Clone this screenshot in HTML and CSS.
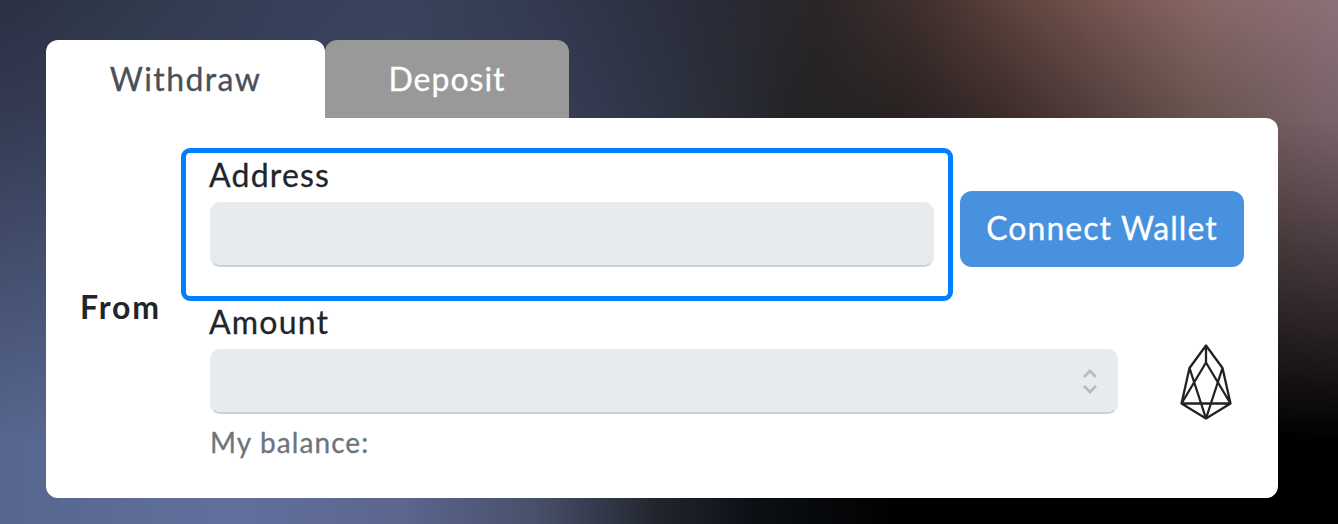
FILE: index.html
```html
<!DOCTYPE html>
<html lang="en">
<head>
<meta charset="utf-8">
<title>Withdraw</title>
<link rel="stylesheet" href="styles.css">
</head>
<body>
<main class="page">
  <nav class="tabs">
    <a class="tab tab-active"><span class="tab-text-active">Withdraw</span></a>
    <a class="tab tab-idle"><span class="tab-text-idle">Deposit</span></a>
  </nav>
  <section class="card">
    <div class="side"><span class="from">From</span></div>
    <div class="form">
      <div class="row row-address">
        <div class="group group-focus">
          <label class="label" for="address"><span class="address-text">Address</span></label>
          <input class="input" id="address" type="text">
        </div>
        <button class="connect"><span class="connect-text">Connect Wallet</span></button>
      </div>
      <div class="row">
        <div class="group group-amount">
          <label class="label" for="amount"><span class="amount-text">Amount</span></label>
          <div class="input stepper">
            <input class="bare" id="amount" type="text">
            <svg class="arrows" width="16" height="26" viewBox="0 0 16 26"><path d="M2 8L8 2L14 8M2 17L8 23L14 17"/></svg>
          </div>
          <div class="balance"><span class="balance-text">My balance:</span></div>
        </div>
        <svg class="eos" width="54" height="78" viewBox="0 0 54 78"><path d="M27 2.5L43.5 25L51.5 60.5L27 75.5L2.5 60.5L10.5 25ZM27 2.5V19.5M27 19.5L2.5 60.5H51.5ZM10.5 25L27 75.5L43.5 25"/></svg>
      </div>
    </div>
  </section>
</main>
</body>
</html>
```
FILE: styles.css
```css
* { box-sizing: border-box; }
body {
  margin: 0;
  font-family: Lato, "Open Sans", sans-serif;
  color: #212529;
}
.page {
  position: relative;
  isolation: isolate;
  width: 1338px;
  height: 524px;
  padding: 40px 60px 26px 46px;
  overflow: hidden;
  background: linear-gradient(90deg, #56668e 0, #626f9d 230px, #5c668f 400px, #474f68 540px, #20242d 660px, #0b0f14 760px, #000 900px);
}
.page::before, .page::after {
  content: "";
  position: absolute;
  inset: 0;
  z-index: -1;
}
.page::before {
  background: linear-gradient(90deg, #343b53 0, #3b4561 400px, #343b52 590px, #2c303c 700px, #232325 800px, #292222 900px, #3b2b2a 1000px, #523f3d 1100px, #69544f 1200px, #7a636c 1338px);
  mask-image: linear-gradient(#000 118px, transparent 440px);
}
.page::after {
  background: linear-gradient(90deg, #2b3044 0, #303a4c 130px, #37405a 300px, #39435b 400px, #333a50 540px, #292c39 700px, #2a2527 820px, #43322f 930px, #5e433d 1010px, #75544f 1100px, #866665 1200px, #8b7078 1338px);
  mask-image: linear-gradient(#000 0, transparent 118px);
}
.tabs { display: flex; height: 78px; }
.tab {
  display: flex;
  justify-content: center;
  border-radius: 12px 12px 0 0;
  font-size: 32px;
  line-height: 78px;
}
.tab-active { width: 279px; background: #fff; color: #495057; }
.tab-idle { width: 244px; background: #999; color: #fff; }
.tab-text-active { letter-spacing: 1.4px; -webkit-text-stroke: .3px; }
.tab-text-idle { letter-spacing: 1px; -webkit-text-stroke: .3px; }
.card {
  display: flex;
  height: 380px;
  padding-top: 30px;
  border-radius: 0 12px 12px 12px;
  background: #fff;
}
.side {
  width: 135px;
  padding: 138px 0 0 34px;
  font-size: 32px;
  line-height: 42px;
  font-weight: 700;
}
.from { letter-spacing: 1.9px; }
.form { flex: 1; }
.row { display: flex; }
.row-address { height: 152px; }
.group { display: flex; flex-direction: column; }
.group-focus {
  width: 772px;
  height: 153px;
  padding: 1px 14px 0 24px;
  border: 5px solid #0080ff;
  border-radius: 9px;
}
.group-amount { width: 937px; padding: 1px 0 0 29px; }
.label {
  height: 48px;
  margin-left: -1px;
  font-size: 32px;
  line-height: 41px;
  -webkit-text-stroke: .3px;
}
.address-text { letter-spacing: 1.2px; }
.amount-text { letter-spacing: 1.2px; }
.input {
  width: 100%;
  height: 65px;
  border: 2px solid transparent;
  border-bottom-color: #cbd0d7;
  border-radius: 10px;
  outline: none;
  background: #e8ebee;
}
.connect {
  width: 284px;
  height: 76px;
  margin: 43px 0 0 7px;
  padding: 0 0 4px;
  border: 0;
  border-radius: 12px;
  background: #4791df;
  color: #fff;
  font: 32px Lato, "Open Sans", sans-serif;
}
.connect-text { letter-spacing: 1.05px; -webkit-text-stroke: .3px; }
.stepper { display: flex; align-items: center; padding-right: 18px; }
.bare { flex: 1; height: 40px; border: 0; outline: none; background: transparent; }
.arrows { fill: none; stroke: #b9bac1; stroke-width: 2.8; }
.balance { font-size: 28px; line-height: 56px; color: #6c757d; }
.balance-text { letter-spacing: 1.1px; -webkit-text-stroke: .3px; }
.eos {
  margin: 43px 0 0 61px;
  fill: none;
  stroke: #222;
  stroke-width: 2.3;
  stroke-linejoin: round;
}
```
